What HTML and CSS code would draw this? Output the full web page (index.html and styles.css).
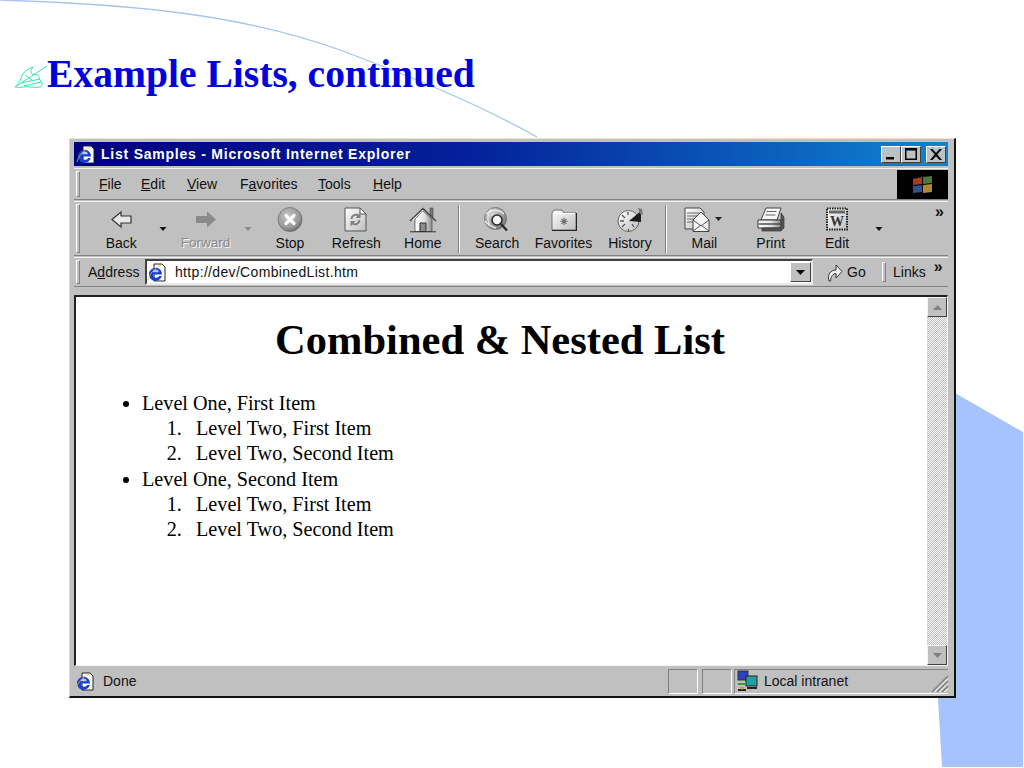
FILE: index.html
```html
<!DOCTYPE html>
<html lang="en">
<head>
<meta charset="utf-8">
<title>Example Lists, continued</title>
<link rel="stylesheet" href="styles.css">
</head>
<body>
<svg class="defs" width="0" height="0" aria-hidden="true">
  <defs>
    <radialGradient id="g-stop" cx=".4" cy=".35" r=".75"><stop offset="0" stop-color="#c4c4c4"/><stop offset=".65" stop-color="#9a9a9a"/><stop offset="1" stop-color="#5c5c5c"/></radialGradient>
    <linearGradient id="g-page" x1="0" y1="0" x2="1" y2="1"><stop offset="0" stop-color="#fff"/><stop offset="1" stop-color="#bdbdbd"/></linearGradient>
    <linearGradient id="g-side" x1="0" y1="0" x2="1" y2="0"><stop offset="0" stop-color="#fff"/><stop offset=".55" stop-color="#e4e4e4"/><stop offset="1" stop-color="#8a8a8a"/></linearGradient>
    <radialGradient id="g-globe" cx=".35" cy=".3" r=".8"><stop offset="0" stop-color="#d8d8d8"/><stop offset="1" stop-color="#707070"/></radialGradient>
  </defs>
  <symbol id="ie" viewBox="0 0 20 20">
    <path d="M7 2h8l3 3v14H7z" fill="#fff" stroke="#222" stroke-width="1"/>
    <path d="M2 12a6.500 6.500 0 1 1 13 .5H6a3.300 3.300 0 0 0 6.200 1.500h2.600A6.500 6.500 0 0 1 2 12z" fill="#1a3fd0"/>
    <path d="M6 10.300h5.800a2.900 2.900 0 0 0-5.800 0z" fill="#a8ccff"/>
    <path d="M1 18c1-5 6-12 13-15" fill="none" stroke="#d8c040" stroke-width=".8"/>
  </symbol>
  <symbol id="drop" viewBox="0 0 18 4"><path d="M5.500 0h7L9 4z"/></symbol>
</svg>

<svg class="backdrop" viewBox="0 0 1024 768" aria-hidden="true">
  <path class="arc" d="M0 0C130 4 240 14 340 50C420 80 480 105 537 137"/>
  <polygon class="wedge" points="955,393 1023,432 1023,767 942,767 938,698 955,698"/>
</svg>

<main class="slide">
  <h1 class="slide-title">
    <svg class="pen" viewBox="0 0 33 22" aria-hidden="true">
      <path d="M8 9C11 5 15 2 19 1C17 4 16 6 18 8L24 9C26 11 24 13 27 15C29 18 28 20 26 21C20 22 13 20 9 21C6 22 3 21 1 21C4 18 7 15 8 9z"/>
      <path d="M1 21L33 0M7 17L26 13M10 20L27 16M11 9L18 14"/>
    </svg>
    <span>Example Lists, continued</span>
  </h1>

  <section class="window">
    <header class="titlebar">
      <svg class="tb-icon"><use href="#ie"/></svg>
      <span class="tb-text">List Samples - Microsoft Internet Explorer</span>
      <div class="tb-buttons">
        <span class="wbtn"><svg viewBox="0 0 18 15"><path d="M4 10h8v2.500H4z"/></svg></span>
        <span class="wbtn"><svg viewBox="0 0 18 15"><path d="M3 1h12v12H3z M4.500 3.500v8h9v-8z" fill-rule="evenodd"/></svg></span>
        <span class="wbtn close"><svg viewBox="0 0 18 15"><path d="M3 2h2.500L9 5.700 12.500 2H15L10.300 7.500 15 13h-2.500L9 9.300 5.500 13H3l4.700-5.500z"/></svg></span>
      </div>
    </header>

    <nav class="bar menubar">
      <span class="grip"></span>
      <div class="menus">
        <span><u>F</u>ile</span>
        <span><u>E</u>dit</span>
        <span><u>V</u>iew</span>
        <span>F<u>a</u>vorites</span>
        <span><u>T</u>ools</span>
        <span><u>H</u>elp</span>
      </div>
      <div class="flagbox">
        <svg viewBox="0 0 24 17" aria-hidden="true">
          <path d="M2 3l9-2v7l-9 1z" fill="#a83c20"/><path d="M12 1l9-1v7l-9 1z" fill="#4c7a3c"/>
          <path d="M2 10l9-1v7l-9 1z" fill="#34508c"/><path d="M12 9l9-1v8l-9 1z" fill="#b08c2c"/>
        </svg>
      </div>
    </nav>

    <div class="bar toolbar">
      <span class="grip"></span>
      <div class="tool">
        <svg viewBox="0 0 28 25"><path d="M5 12.500l9-7.500v4h10v7H14v4z" fill="#e8e8e8" stroke="#333" stroke-width="1.200"/></svg>
        <span>Back</span>
      </div>
      <svg class="caret"><use href="#drop"/></svg>
      <div class="tool off">
        <svg viewBox="0 0 28 25"><path d="M24 12.500l-9-8v4.500H4v7h11v4.500z" fill="#8a8a8a"/></svg>
        <span>Forward</span>
      </div>
      <svg class="caret faint"><use href="#drop"/></svg>
      <div class="tool">
        <svg viewBox="0 0 28 25"><circle cx="14" cy="12.500" r="12" fill="url(#g-stop)" stroke="#5c5c5c" stroke-width=".6"/><path d="M10 8.500l8 8M18 8.500l-8 8" stroke="#fff" stroke-width="3.200" stroke-linecap="round"/></svg>
        <span>Stop</span>
      </div>
      <div class="tool">
        <svg viewBox="0 0 28 25"><path d="M3 1h15l6 6v17H3z" fill="url(#g-page)" stroke="#555"/><path d="M18 1v6h6z" fill="#fff" stroke="#555"/><path d="M9.500 12a4.500 4.500 0 0 1 7-3.500M17.500 13a4.500 4.500 0 0 1-7 3.500" fill="none" stroke="#808080" stroke-width="2"/><path d="M18.500 5.500v5.500h-5zM8.500 19.500v-5.500h5z" fill="#808080"/></svg>
        <span>Refresh</span>
      </div>
      <div class="tool">
        <svg viewBox="0 0 28 25"><path d="M21 1h3v9l-3-3z" fill="#777" stroke="#444" stroke-width=".6"/><path d="M6 12L14 4l9 8v12.500H6z" fill="url(#g-side)" stroke="#555" stroke-width=".8"/><path d="M1 14L14 1.500 27 14" fill="none" stroke="#444" stroke-width="1.500"/><path d="M3.500 13L14 3.500" fill="none" stroke="#fff" stroke-width="1"/><path d="M11 24.500V16h6v8.500z" fill="#8c8c8c" stroke="#333"/><path d="M1 24.800h26" stroke="#333"/></svg>
        <span>Home</span>
      </div>
      <span class="sep"></span>
      <div class="tool">
        <svg viewBox="0 0 28 25"><circle cx="12.500" cy="11.500" r="11" fill="url(#g-globe)" stroke="#666" stroke-width=".7"/><path d="M3 7c5-5 13-5 18 0M2 14c3 4 7 6 11 7M8 2c-4 5-4 11-1 17" fill="none" stroke="#e8e8e8" stroke-width="1.300"/><circle cx="14" cy="13" r="5" fill="#f6f6f6" stroke="#2a2a2a" stroke-width="1.600"/><path d="M18 17l6 6.500" stroke="#2a2a2a" stroke-width="2.400"/></svg>
        <span>Search</span>
      </div>
      <div class="tool">
        <svg viewBox="0 0 28 25"><path d="M2 6l2-3h8l2 3h12v17H2z" fill="url(#g-page)" stroke="#555" stroke-width=".8"/><path d="M3 6.500h22" stroke="#fff"/><path d="M2 23.500h25M26.500 6v17" stroke="#222"/><path d="M14 10.500v7.500M10.300 14.200h7.400M11.500 11.800l5 5M16.500 11.800l-5 5" stroke="#6a6a6a" stroke-width="1.100"/></svg>
        <span>Favorites</span>
      </div>
      <div class="tool">
        <svg viewBox="0 0 28 25"><circle cx="12.500" cy="14" r="10.500" fill="url(#g-page)" stroke="#666"/><path d="M13 14L25 4v11z" fill="#1c1c1c"/><path d="M22 1l4 1 1 6-3-1z" fill="#777"/><path d="M4 14h4M12.500 22v2.500M6 8l3 3M6 20l3-3M12 5v3M18 20l-2-3" stroke="#555" stroke-width="1.300"/></svg>
        <span>History</span>
      </div>
      <span class="sep"></span>
      <div class="tool">
        <svg class="wide" viewBox="0 0 40 25"><path d="M1 1h15l4 4v17H1z" fill="url(#g-page)" stroke="#444"/><path d="M3 6h12M3 9h12M3 12h9M3 15h6" stroke="#666"/><path d="M9 13l8-8 8 8v11.500H9z" fill="#f4f4f4" stroke="#444"/><path d="M9 13l8 6 8-6M9 24l8-6 8 6" fill="none" stroke="#555"/><path d="M31 10h7l-3.500 4z" fill="#222"/></svg>
        <span>Mail</span>
      </div>
      <div class="tool">
        <svg viewBox="0 0 28 25"><path d="M9 1h15l-4 12H4z" fill="#f6f6f6" stroke="#444"/><path d="M9.500 4.500h10M8.500 8h10" stroke="#666" stroke-width="1.200"/><path d="M1 13h23v8H1z" fill="url(#g-side)" stroke="#333"/><path d="M24 6l3 4v11l-3 3H5v-3h19z" fill="#555" stroke="#333" stroke-width=".7"/><path d="M2 17h21" stroke="#444" stroke-width="1.400"/></svg>
        <span>Print</span>
      </div>
      <div class="tool">
        <svg viewBox="0 0 28 25"><rect x="4" y="1.500" width="20" height="21" fill="url(#g-page)" stroke="#222" stroke-width="2" stroke-dasharray="1.500 1"/><rect x="6" y="3.500" width="16" height="3" fill="#666"/><text class="edit-w" x="14" y="19" text-anchor="middle">W</text></svg>
        <span>Edit</span>
      </div>
      <svg class="caret"><use href="#drop"/></svg>
      <span class="chev">»</span>
    </div>

    <div class="bar addressbar">
      <span class="grip"></span>
      <span class="addr-label">A<u>d</u>dress</span>
      <div class="addr-field">
        <svg class="tb-icon addr-icon"><use href="#ie"/></svg>
        <span class="url">http://dev/CombinedList.htm</span>
        <span class="addr-drop"><svg viewBox="0 0 9 5"><path d="M0 0h9L4.500 5z"/></svg></span>
      </div>
      <div class="go">
        <svg viewBox="0 0 16 20" aria-hidden="true"><path d="M2 19C0 12 4 8 9 8V3l6 6.500-6 6.500v-4.500C6 11.500 4 14 3.500 19z" fill="#f4f4f4" stroke="#333"/></svg>
        <span>Go</span>
      </div>
      <span class="grip mini"></span>
      <span class="links">Links</span>
      <span class="chev links-chev">»</span>
    </div>

    <div class="viewport">
      <article class="doc">
        <h2>Combined &amp; Nested List</h2>
        <ul>
          <li>Level One, First Item
            <ol><li>Level Two, First Item</li><li>Level Two, Second Item</li></ol>
          </li>
          <li>Level One, Second Item
            <ol><li>Level Two, First Item</li><li>Level Two, Second Item</li></ol>
          </li>
        </ul>
      </article>
      <aside class="scrollbar">
        <span class="sbtn"><svg viewBox="0 0 9 5"><path d="M4.500 0L9 5H0z"/></svg></span>
        <span class="strack"></span>
        <span class="sbtn"><svg viewBox="0 0 9 5"><path d="M0 0h9L4.500 5z"/></svg></span>
      </aside>
    </div>

    <footer class="status">
      <svg class="tb-icon status-icon"><use href="#ie"/></svg>
      <span class="done">Done</span>
      <span class="panel p1"></span>
      <span class="panel p2"></span>
      <div class="panel zone">
        <svg viewBox="0 0 22 22" aria-hidden="true">
          <rect x="1" y="1" width="10" height="9" fill="#3040c0" stroke="#333"/><rect x="9" y="6" width="11" height="10" fill="#20a0a0" stroke="#222"/><rect x="1" y="13" width="7" height="2" fill="#3a9a3a"/><path d="M1 20h8M10 18h10" stroke="#222" stroke-width="2"/><path d="M2 17h6l-3 3z" fill="#c8a020"/>
        </svg>
        <span>Local intranet</span>
      </div>
      <svg class="resize" viewBox="0 0 18 18" aria-hidden="true"><path d="M17 1L1 17M17 6L6 17M17 11l-6 6" stroke="#808080" stroke-width="1.500"/><path d="M17 3.500L3.500 17M17 8.500L8.500 17M17 13.500L13.500 17" stroke="#fff"/></svg>
    </footer>
  </section>
</main>
</body>
</html>
```

FILE: styles.css
```css
* { box-sizing: border-box; }
html, body { margin: 0; padding: 0; background: #fff; }
body { width: 1024px; height: 768px; overflow: hidden; position: relative; font-family: "Liberation Sans", Arial, sans-serif; }

.defs { position: absolute; }
.backdrop { position: absolute; left: 0; top: 0; width: 1024px; height: 768px; }
.arc { fill: none; stroke: #a9c2f0; stroke-width: 1.300; }
.wedge { fill: #a6c3ff; }

.slide { position: relative; padding: 51px 0 0 14px; }
.slide-title { display: flex; align-items: flex-start; margin: 0; height: 87px; font: bold 39.6px/46px "Liberation Serif", "Times New Roman", serif; color: #0000e0; }
.pen { width: 33px; height: 22px; margin-top: 15px; fill: none; stroke: #30e8a8; stroke-width: 1; overflow: visible; }

.window { display: flex; flex-direction: column; width: 887px; height: 560px; margin-left: 55px; padding: 3px 6px 3px 4px; background: #c0c0c0; border-top: 1px solid #e4e4e4; border-left: 1px solid #d8d8d8; border-right: 2px solid #111; border-bottom: 2px solid #111; }

.titlebar { display: flex; align-items: center; flex: none; height: 24px; background: linear-gradient(90deg, #000080 0%, #04209a 45%, #1084d0 100%); color: #fff; }
.tb-icon { width: 20px; height: 20px; flex: none; }
.titlebar .tb-icon { margin: 0 5px 0 2px; }
.tb-text { font-weight: bold; font-size: 14px; letter-spacing: .77px; white-space: nowrap; }
.tb-buttons { display: flex; margin-left: auto; margin-right: 2px; }
.wbtn { width: 20px; height: 17px; background: #c0c0c0; border: 1px solid; border-color: #fff #404040 #404040 #fff; display: flex; }
.wbtn.close { margin-left: 5px; }
.wbtn svg { width: 100%; height: 100%; fill: #000; }

.bar { display: flex; align-items: center; flex: none; border-top: 1px solid #f0f0f0; border-bottom: 1px solid #808080; font-size: 14px; color: #111; }
.grip { flex: none; width: 4px; align-self: stretch; margin: 2px 0 2px 2px; background: #c0c0c0; border: 1px solid; border-color: #fff #808080 #808080 #fff; }

.menubar { height: 32px; margin-top: 2px; }
.menus { display: grid; grid-template-columns: 42px 46px 53px 78px 55px auto; margin-left: 19px; }
.flagbox { margin-left: auto; width: 51px; height: 29px; background: #000; display: flex; align-items: center; justify-content: center; }
.flagbox svg { width: 24px; height: 17px; }

.toolbar { height: 55px; margin-top: 1px; }
.tool { flex: none; width: 66.400px; display: flex; flex-direction: column; align-items: center; height: 100%; padding-top: 5px; }
.toolbar > .tool:first-of-type { margin-left: 8px; }
.tool svg { width: 28px; height: 25px; flex: none; overflow: visible; }
.tool svg.wide { width: 40px; }
.tool span { margin-top: 3px; line-height: 16px; }
.tool.off span { color: #8a8a8a; text-shadow: 1px 1px 0 #f4f4f4; font-size: 13.500px; }
.caret { flex: none; width: 18px; height: 4px; fill: #111; }
.caret.faint { fill: #888; }
.sep { flex: none; width: 2px; height: 48px; margin: 0 4px 0 2px; border-left: 1px solid #808080; border-right: 1px solid #fff; }
.chev { font-weight: bold; font-size: 16px; line-height: 14px; margin: -34px 0 0 auto; padding-right: 4px; }

.addressbar { height: 30px; margin-top: 1px; }
.addr-label { margin-left: 2px; flex: none; width: 63px; padding-left: 6px; }
.addr-field { display: flex; align-items: center; flex: none; width: 668px; height: 26px; background: #fff; border: 2px solid; border-color: #404040 #e8e8e8 #e8e8e8 #404040; }
.url { margin-left: 8px; letter-spacing: .33px; }
.addr-drop { margin-left: auto; width: 21px; height: 20px; background: #c0c0c0; border: 1px solid; border-color: #fff #404040 #404040 #fff; display: flex; align-items: center; justify-content: center; }
.addr-drop svg { width: 9px; height: 5px; fill: #000; }
.go { display: flex; align-items: center; gap: 4px; margin-left: 14px; flex: none; width: 54px; }
.go svg { width: 16px; height: 20px; flex: none; }
.grip.mini { margin: 4px 7px 4px 1px; }
.links-chev { margin: -10px 0 0 8px; padding: 0; }

.viewport { display: flex; flex: none; height: 371px; margin-top: 8px; background: #fff; border-top: 2px solid #222; border-left: 2px solid #222; border-right: 1px solid #f4f4f4; border-bottom: 1px solid #f4f4f4; }
.doc { flex: 1; min-width: 0; color: #000; font-family: "Liberation Serif", "Times New Roman", serif; }
.doc h2 { margin: 18px 0 0; padding-right: 3px; text-align: center; font-size: 42.500px; line-height: 50px; font-weight: bold; }
.doc ul { margin: 26px 0 0; padding-left: 66px; font-size: 20.200px; line-height: 25.200px; }
.doc ol { margin: 0; padding-left: 54px; }
.doc ol li::marker { content: counter(list-item) ".\2002\2009"; }

.scrollbar { flex: none; width: 20px; display: flex; flex-direction: column; }
.sbtn { flex: none; height: 20px; display: flex; align-items: center; justify-content: center; background: #c0c0c0; border: 1px solid; border-color: #f4f4f4 #404040 #404040 #f4f4f4; }
.sbtn svg { width: 9px; height: 5px; fill: #808080; }
.strack { flex: 1; background: repeating-conic-gradient(#c0c0c0 0 25%, #f6f6f6 0 50%) 0 0 / 2px 2px; }

.status { display: flex; align-items: center; flex: none; height: 26px; margin-top: 2px; font-size: 14px; color: #111; position: relative; }
.status-icon { margin-left: 1px; }
.done { margin-left: 8px; }
.panel { flex: none; height: 25px; border: 1px solid; border-color: #808080 #fff #fff #808080; }
.p1 { margin-left: auto; width: 30px; }
.p2 { width: 30px; margin-left: 4px; }
.zone { display: flex; align-items: center; width: 214px; margin-left: 2px; gap: 5px; padding-left: 2px; border-right: none; }
.zone svg { width: 22px; height: 22px; flex: none; }
.resize { position: absolute; right: -1px; bottom: 1px; width: 18px; height: 18px; }
.edit-w { font: bold 14px "Liberation Serif", serif; fill: #333; }
```
